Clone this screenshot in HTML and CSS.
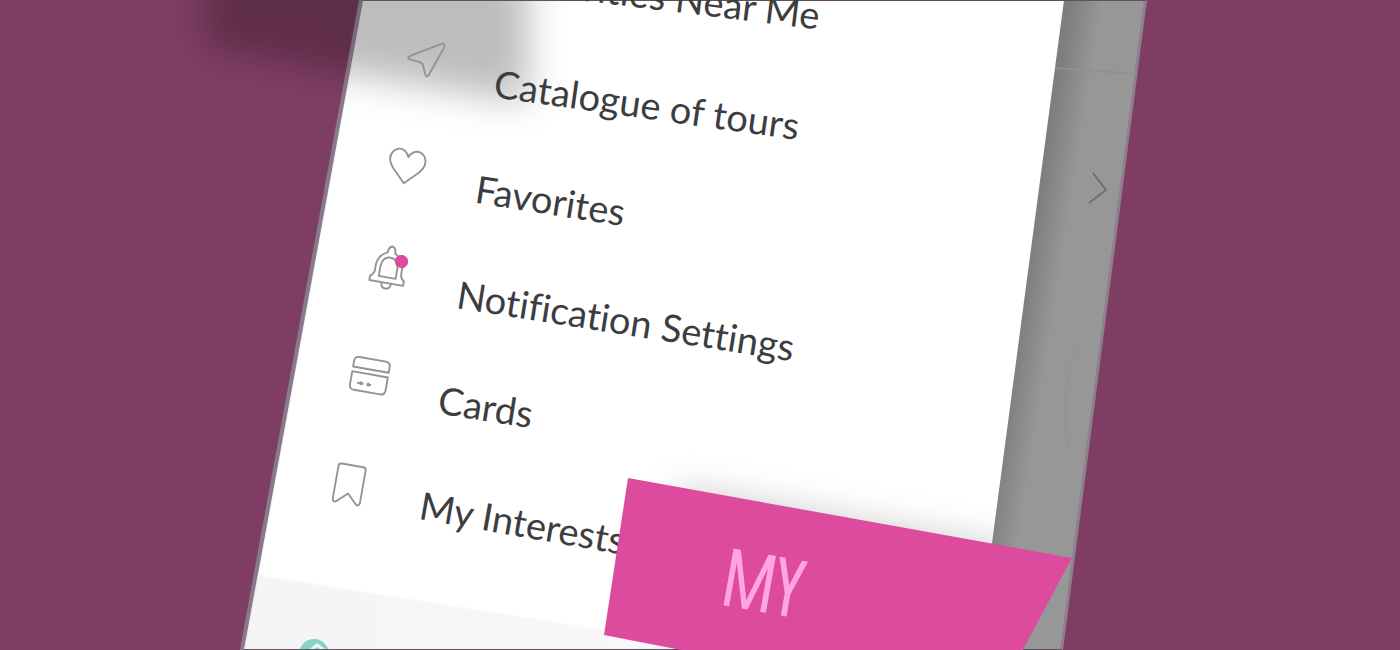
FILE: index.html
```html
<!DOCTYPE html>
<html lang="en">
<head>
<meta charset="utf-8">
<meta name="viewport" content="width=device-width, initial-scale=1">
<title>My Interests</title>
<link rel="stylesheet" href="styles.css">
</head>
<body>
<main class="stage">
  <svg class="scene" viewBox="0 0 1400 650" preserveAspectRatio="xMinYMin slice" aria-hidden="true">
    <defs>
      <filter id="soft" x="-30%" y="-50%" width="160%" height="200%"><feGaussianBlur stdDeviation="18"/></filter>
      <filter id="slight"><feGaussianBlur stdDeviation="1"/></filter>
      <linearGradient id="drawer" gradientUnits="userSpaceOnUse" x1="1028" y1="270" x2="1060" y2="275">
        <stop offset="0" stop-color="#7e7e7e"/><stop offset="1" stop-color="#979798"/>
      </linearGradient>
      <linearGradient id="foot" gradientUnits="userSpaceOnUse" x1="250" y1="0" x2="620" y2="0">
        <stop offset="0" stop-color="#f4f4f5"/><stop offset="1" stop-color="#f8f8f8"/>
      </linearGradient>
      <clipPath id="sheet"><path d="M363 0H1064L992 543L978 650H244Z"/></clipPath>
    </defs>
    <path fill="#8d7f8d" d="M359 0H1147L1063 650H240Z"/>
    <path fill="url(#drawer)" d="M1060 0H1144L1060 650H970Z"/>
    <path d="M1055 68L1137 74" stroke="#919192" stroke-width="2"/>
    <path d="M1079 345Q1056 395 1070 450" fill="none" stroke="#949495" stroke-width="2"/>
    <path d="M1093 173L1106 190L1089 203" fill="none" stroke="#707070" stroke-width="2"/>
    <path fill="#fff" d="M363 0H1064L992 543L978 650H244Z"/>
    <g clip-path="url(#sheet)">
      <path fill="url(#foot)" d="M250 574L700 645V680H230Z" filter="url(#slight)"/>
      <path d="M675 488L1020 550V640H675Z" fill="#000" fill-opacity=".2" filter="url(#soft)"/>
      <circle cx="314" cy="654" r="15" fill="#86d3c5"/>
      <path d="M311 650L317 645L324 650" fill="none" stroke="#e5f7f3" stroke-width="3"/>
    </g>
    <path d="M205 -60H528V102L360 76L205 46Z" fill="#000" fill-opacity=".26" filter="url(#soft)"/>
    <path d="M361 0L242 650" stroke="#85758a" stroke-width="2" filter="url(#slight)"/>
    <path d="M363 .5H1146M244 649.5H1062" stroke="#644f5d" stroke-width="1"/>
  </svg>

  <nav class="menu" aria-label="Main menu">
    <a class="item tilt-3" href="#near">
      <svg class="icon" viewBox="0 0 40 40"><circle cx="20" cy="20" r="14"/></svg>
      <span class="label">Activities Near Me</span>
    </a>
    <a class="item tilt-2" href="#tours">
      <svg class="icon" viewBox="0 0 40 40"><path d="M2 21Q1 19 4 17L34 -1Q38 -2 37 3L26 34Q24 38 22 33L18 24Q17 23 13 22Z" /></svg>
      <span class="label">Catalogue of tours</span>
    </a>
    <a class="item tilt-1" href="#favorites">
      <svg class="icon" viewBox="0 0 40 40"><path d="M20 38L6 24C-5 11 6 -1 15 4Q19 7 20 10Q21 7 25 4C34 -1 45 11 34 24Z"/></svg>
      <span class="label">Favorites</span>
    </a>
    <a class="item tilt-1" href="#notifications">
      <svg class="icon" viewBox="0 0 40 40"><path d="M2 32V27Q6 25 6 20V14Q7 4 16 0Q16 -6 20 -7Q24 -6 24 0Q33 4 34 14V20Q34 25 38 27V32Z"/><path d="M11 26V15Q12 5 20 5Q28 5 29 15V26ZM15 32Q15 38 20 38Q25 38 25 32"/><circle class="dot" cx="32" cy="7" r="7"/></svg>
      <span class="label">Notification Settings</span>
    </a>
    <a class="item tilt-1" href="#cards">
      <svg class="icon" viewBox="0 0 40 40"><path d="M1 12V6Q1 1 6 1H34Q39 1 39 6V12ZM1 17H39V31Q39 36 34 36H6Q1 36 1 31Z"/><path d="M8 28H15M18 28H23M12 26V30M20 26V30"/></svg>
      <span class="label">Cards</span>
    </a>
    <a class="item" href="#interests">
      <svg class="icon" viewBox="0 0 40 40"><path d="M4 5Q4 2 7 2H30Q33 2 33 5V40Q32 44 29 42L19 32L8 42Q5 44 4 40Z"/></svg>
      <span class="label">My Interests</span>
    </a>
  </nav>

  <section class="banner"><h1 class="banner-title">MY</h1></section>
</main>
</body>
</html>
```
FILE: styles.css
```css
* { box-sizing: border-box; }
body { margin: 0; background: #7f3d63; font-family: Lato, sans-serif; }
.stage { position: relative; min-height: 100vh; overflow: hidden; }
.scene { position: absolute; inset: 0; width: 100%; height: 100%; }

/* The menu lies on the tilted phone */
.menu {
  position: absolute;
  left: 433px;
  top: -92px;
  display: flex;
  flex-direction: column;
  transform: rotate(10deg);
  transform-origin: 0 0;
}
.item {
  display: flex;
  align-items: center;
  gap: 53px;
  height: 107px;
  color: #3c3d41;
  text-decoration: none;
}
.icon {
  width: 38px;
  height: 38px;
  margin-bottom: 18px;
  overflow: visible;
  fill: none;
  stroke: #949494;
  stroke-width: 2;
  stroke-linejoin: round;
}
.dot { fill: #dc4b9e; stroke: none; }
.label {
  font-size: 38px;
  line-height: 48px;
  font-variant-ligatures: none;
  white-space: nowrap;
  transform-origin: 0 50%;
}
.tilt-1 .label { transform: rotate(-1deg); }
.tilt-2 .label { transform: rotate(-2deg); }
.tilt-3 .label { transform: rotate(-3deg); }

.banner {
  position: absolute;
  left: 604px;
  top: 478px;
  width: 468px;
  height: 190px;
  padding: 56px 120px;
  background: #dc4b9e;
  clip-path: polygon(24px 0, 100% 80px, 409px 100%, 170px 100%, 0 157px);
}
.banner-title {
  margin: 0;
  color: #ffa5e0;
  font-family: "Open Sans Condensed Light", "Roboto Condensed Light", "Roboto Condensed", "Liberation Sans Narrow", sans-serif;
  font-size: 78px;
  font-weight: 300;
  line-height: 80px;
  -webkit-text-stroke: 2px #ffa5e0;
  transform: rotate(10deg);
  transform-origin: 0 50%;
}
```
